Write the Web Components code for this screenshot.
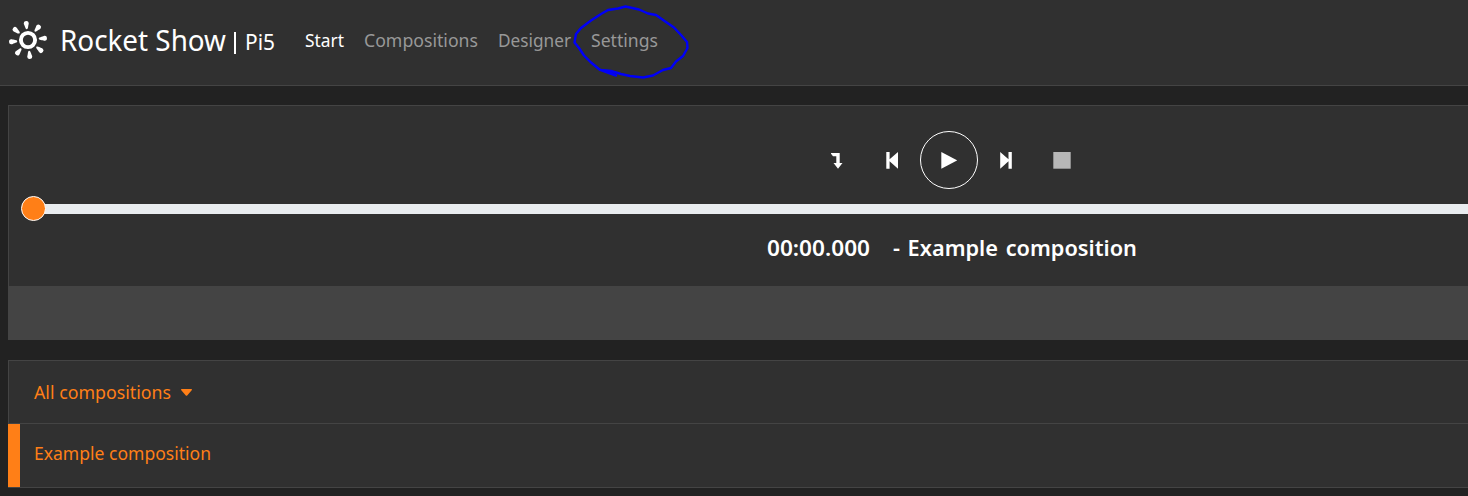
<!DOCTYPE html>
<html lang="en">
<head>
<meta charset="utf-8">
<title>Rocket Show</title>
<style>
html,body{margin:0;height:100%;overflow:hidden;background:#222}
body{font-family:"Noto Sans","Open Sans",sans-serif;color:#fff}
</style>
</head>
<body>
<rocket-app></rocket-app>
<script>
class Base extends HTMLElement{
  constructor(){super();this.attachShadow({mode:'open'}).innerHTML=this.constructor.html}
}
/* Single-line label condensed to the width it is given. */
class UiLabel extends Base{
  static html=`<style>
    :host{display:block;flex:none;white-space:nowrap;line-height:30px;height:30px}
    span{display:inline-block;transform-origin:0 50%}
  </style><span><slot></slot></span>`;
  connectedCallback(){
    const s=this.shadowRoot.querySelector('span'),w=+this.getAttribute('width');
    this.style.width=w+'px';
    this.style.fontSize=this.getAttribute('size')+'px';
    s.style.transform='scaleX('+w/s.getBoundingClientRect().width+')';
  }
}
customElements.define('ui-label',UiLabel);

class RocketLogo extends Base{
  static html=`<style>:host{display:block;flex:none;width:40px;height:40px}svg{display:block}</style>
  <svg width="40" height="40" viewBox="-20 -20 40 40" fill="#fff">
    <defs><path id="d" d="M0-10.800C-1-10.800-1.300-12.200-1.700-13.800C-2-15.300-2.500-15.900-2.500-16.900A2.500 2.200 0 0 1 2.500-16.900C2.500-15.900 2-15.300 1.700-13.800C1.300-12.200 1-10.800 0-10.800Z"/></defs>
    <circle r="7.1" fill="none" stroke="#fff" stroke-width="3.9"/>
    <g transform="rotate(-6)"><use href="#d"/><use href="#d" transform="rotate(45)"/><use href="#d" transform="rotate(90)"/><use href="#d" transform="rotate(135)"/><use href="#d" transform="rotate(180)"/><use href="#d" transform="rotate(225)"/><use href="#d" transform="rotate(270)"/><use href="#d" transform="rotate(315)"/></g>
  </svg>`;
}
customElements.define('rocket-logo',RocketLogo);

class TopBar extends Base{
  static html=`<style>
    :host{display:flex;align-items:flex-start;position:relative;box-sizing:border-box;height:86px;padding:20px 0 0 8px;background:#303030;border-bottom:1px solid #444}
    .name{margin:5px 0 0 12px}
    .bar{width:1.5px;height:22px;margin:12px 0 0 8px;background:#fff}
    .host{margin:7px 0 0 9px}
    nav{display:flex;gap:20px;margin:5px 0 0 30px;color:#989898}
    .on{color:#fff}
    .mark{position:absolute;left:560px;top:0}
  </style>
  <rocket-logo></rocket-logo>
  <ui-label class="name" size="29" width="166">Rocket Show</ui-label>
  <div class="bar"></div>
  <ui-label class="host" size="21.8" width="30">Pi5</ui-label>
  <nav>
    <ui-label class="on" size="18.7" width="39">Start</ui-label>
    <ui-label size="18.7" width="114">Compositions</ui-label>
    <ui-label size="18.7" width="73">Designer</ui-label>
    <ui-label size="18.7" width="67">Settings</ui-label>
  </nav>
  <svg class="mark" width="140" height="86" viewBox="0 0 140 86" fill="none" stroke="#0000f8" stroke-width="2.4" stroke-linecap="round" stroke-linejoin="round">
    <path d="M56 75.5L49 73L39.5 69.5L31 62.5L24 55.5L19 48L14.5 42.5L16 34L21 28L31 20.5L41 14L48 10L58 8.5L65.5 6.5L79 9.500L88 13.500L96 15L106 22L114 27.500L121 35L127 42L127.500 48L123 56L116 61.500L111 68L103 70L93 75.500L83 77.500L70 76L61 74L51 71L41 70"/>
  </svg>`;
}
customElements.define('top-bar',TopBar);

class SeekBar extends Base{
  static html=`<style>
    :host{display:flex;align-items:flex-start;height:26px}
    i{flex:none;box-sizing:border-box;width:25px;height:25px;border:1px solid #fff;border-radius:50%;background:#ff7f17}
    b{flex:1;height:10px;background:#e9ecef;margin:8px 0 0 -2px}
    i{position:relative;z-index:1}
  </style><i></i><b></b>`;
}
customElements.define('seek-bar',SeekBar);

class TransportControls extends Base{
  static html=`<style>
    :host{display:flex;align-items:center;height:58px;fill:#fff}
    svg{display:block;flex:none}
    .play{box-sizing:border-box;width:58px;height:58px;border:1px solid #fff;border-radius:50%;display:grid;place-items:center;margin:0 22px}
  </style>
  <svg width="12" height="18" viewBox="0 0 12 18"><path d="M-.5 2H8.700V12H11.500L7 17.800L2.500 12H5.300V5.200H2Z"/></svg>
  <svg width="12" height="18" viewBox="0 0 12 18" style="margin-left:43px"><path d="M.300 1H3.600V8.300L12 1V17.800L3.600 10.200V17.800H.300Z"/></svg>
  <div class="play"><svg width="16" height="18" viewBox="0 0 16 18"><path d="M.3 1L16.300 9.300L.3 17.700Z"/></svg></div>
  <svg width="12" height="18" viewBox="0 0 12 18"><path d="M11.800 1H8.500V8.300L.200 1V17.800L8.500 10.200V17.800H11.800Z"/></svg>
  <svg width="18" height="18" viewBox="0 0 18 18" style="margin-left:41px"><path fill="#b7b7b7" d="M.3 1H17.700V17.700H.3Z"/></svg>`;
}
customElements.define('transport-controls',TransportControls);

class PlayerPanel extends Base{
  static html=`<style>
    :host{display:block;box-sizing:border-box;height:235px;border:1px solid #444;border-right:0;background:#303030;padding:25px 0 0 12px}
    transport-controls{margin-left:810px}
    seek-bar{margin-top:7px}
    .title{display:flex;gap:23px;margin:11px 0 0 746px;font-weight:600}
    .song{word-spacing:2px}
    .foot{height:53px;margin:23px 0 0 -12px;background:#444}
  </style>
  <transport-controls></transport-controls>
  <seek-bar></seek-bar>
  <div class="title"><ui-label size="21.8" width="103">00:00.000</ui-label><ui-label class="song" size="21.8" width="244">- Example composition</ui-label></div>
  <div class="foot"></div>`;
}
customElements.define('player-panel',PlayerPanel);

class CompositionList extends Base{
  static html=`<style>
    :host{display:block;box-sizing:border-box;height:128px;border:1px solid #444;border-width:1px 0;background:#303030;color:#ff7f17}
    .head,.row{display:flex;box-sizing:border-box}
    .head{height:63px;border-left:1px solid #444;border-bottom:1px solid #444;padding:16px 0 0 25px}
    .row{height:63px;border-left:12px solid #ff7f17;padding:14px 0 0 13.5px}
    svg{margin:12px 0 0 10px;fill:#ff7f17}
  </style>
  <div class="head"><ui-label size="18.7" width="137">All compositions</ui-label><svg width="11" height="7" viewBox="0 0 11 7"><path d="M.5 0H10.500Q11.300.500 10.700 1.200L6.200 6.500Q5.500 7.100 4.800 6.500L.3 1.200Q-.3.500.5 0Z"/></svg></div>
  <div class="row"><ui-label size="18.7" width="177">Example composition</ui-label></div>`;
}
customElements.define('composition-list',CompositionList);

class RocketApp extends Base{
  static html=`<style>
    :host{display:block}
    main{display:flex;flex-direction:column;gap:20px;padding:19px 0 0 8px}
  </style>
  <top-bar></top-bar>
  <main><player-panel></player-panel><composition-list></composition-list></main>`;
}
customElements.define('rocket-app',RocketApp);
</script>
</body>
</html>
